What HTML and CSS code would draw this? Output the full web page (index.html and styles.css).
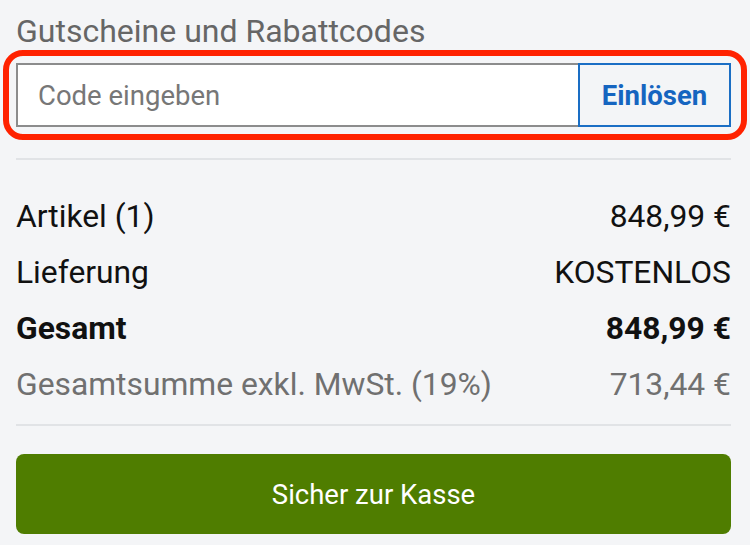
FILE: index.html
```html
<!DOCTYPE html>
<html lang="de">
<head>
<meta charset="utf-8">
<link rel="stylesheet" href="styles.css">
</head>
<body>
<div class="page">
  <h2 class="title">Gutscheine und Rabattcodes</h2>
  <div class="highlight">
    <div class="code-group">
      <input class="code-input" type="text" placeholder="Code eingeben">
      <button class="redeem">Einlösen</button>
    </div>
  </div>
  <hr class="divider first">
  <div class="summary">
    <div class="row"><span>Artikel (1)</span><span>848,99 €</span></div>
    <div class="row"><span>Lieferung</span><span>KOSTENLOS</span></div>
    <div class="row total"><span>Gesamt</span><span>848,99 €</span></div>
    <div class="row net"><span>Gesamtsumme exkl. MwSt. (19%)</span><span>713,44 €</span></div>
  </div>
  <hr class="divider second">
  <button class="checkout">Sicher zur Kasse</button>
</div>
</body>
</html>
```

FILE: styles.css
```css
html, body {
  margin: 0;
  padding: 0;
  background: #f4f5f7;
}
body {
  font-family: Roboto, "Liberation Sans", Arial, sans-serif;
  color: #111;
}
.page {
  padding: 12px 19px 0 16px;
}
.title {
  margin: 0;
  font-size: 32px;
  font-weight: 400;
  color: #666;
  line-height: 38px;
}
.highlight {
  margin: 0 -16px 0 -13px;
  border: 6px solid #ff2200;
  border-radius: 20px;
  padding: 7px 10px 7px 7px;
}
.code-group {
  display: flex;
  height: 64px;
}
.code-input {
  flex: 1;
  min-width: 0;
  box-sizing: border-box;
  height: 64px;
  margin: 0;
  border: 2px solid #8c8c8c;
  border-right: none;
  background: #fff;
  padding: 0 0 0 20px;
  font-family: inherit;
  font-size: 27.5px;
  color: #333;
  outline: none;
}
.code-input::placeholder {
  color: #777;
}
.redeem {
  width: 153px;
  box-sizing: border-box;
  height: 64px;
  margin: 0;
  border: 2px solid #1a6ec4;
  background: #f3f5f7;
  color: #1565c0;
  font-family: inherit;
  font-size: 27.5px;
  font-weight: 700;
  padding: 0;
}
.divider {
  border: none;
  height: 2px;
  background: #e1e3e6;
  margin: 0;
}
.divider.first {
  margin-top: 18px;
}
.summary {
  padding: 28px 0 12px;
}
.row {
  display: flex;
  justify-content: space-between;
  font-size: 31.8px;
  line-height: 56px;
  color: #111;
}
.row.total {
  font-weight: 700;
}
.row.net {
  color: #707070;
}
.checkout {
  display: block;
  width: 100%;
  margin-top: 28px;
  height: 80px;
  border: none;
  border-radius: 8px;
  background: #4f7d00;
  color: #fff;
  font-family: inherit;
  font-size: 27.5px;
}
```
